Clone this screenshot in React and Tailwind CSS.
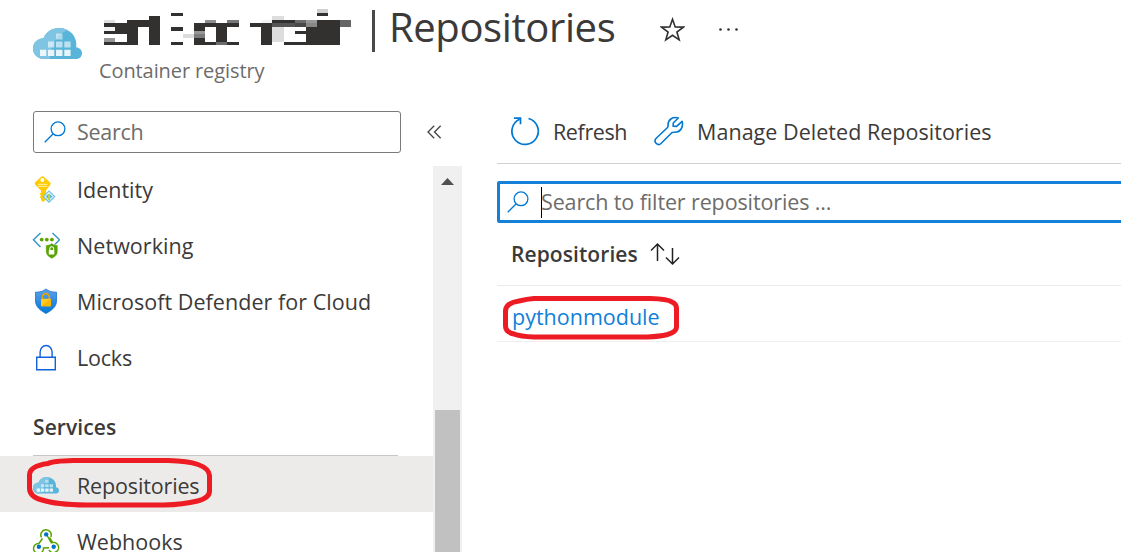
import React from "react";

// Redacted registry name: [x, y, width, height, colour] blocks on a fine grid.
const MOSAIC = [
  [252, 60, 33, 9, "#e0e0e0"], [252, 69, 69, 12, "#323130"], [252, 81, 33, 12, "#f3f3f3"],
  [285, 81, 36, 12, "#323130"], [252, 93, 69, 9, "#323130"], [252, 114, 33, 12, "#979797"],
  [252, 126, 102, 9, "#323130"], [321, 60, 33, 75, "#323130"], [354, 60, 33, 21, "#323130"],
  [387, 48, 33, 87, "#323130"], [453, 39, 36, 9, "#323130"], [453, 81, 36, 12, "#323130"],
  [453, 126, 36, 9, "#323130"], [489, 102, 33, 12, "#dcdcdc"], [522, 69, 33, 24, "#323130"],
  [522, 93, 33, 9, "#979797"], [522, 102, 33, 12, "#7c7c7c"], [522, 114, 33, 21, "#323130"],
  [555, 60, 33, 9, "#8f8f8f"], [555, 69, 33, 12, "#323130"], [555, 126, 33, 9, "#323130"],
  [588, 69, 33, 57, "#323130"], [588, 126, 33, 9, "#6b6b6b"], [621, 60, 36, 9, "#777777"],
  [621, 69, 36, 12, "#323130"], [621, 126, 36, 9, "#323130"], [690, 69, 33, 12, "#323130"],
  [723, 60, 33, 9, "#f3f3f3"], [723, 69, 33, 66, "#323130"], [756, 48, 36, 12, "#dddddd"],
  [756, 60, 69, 9, "#323130"], [756, 69, 69, 12, "#555555"], [756, 81, 36, 45, "#dddddd"],
  [792, 126, 66, 9, "#323130"], [825, 60, 33, 9, "#6b6b6b"], [825, 69, 33, 12, "#484848"],
  [825, 93, 33, 9, "#323130"], [858, 60, 33, 9, "#979797"], [858, 69, 33, 12, "#888888"],
  [858, 81, 33, 54, "#323130"], [891, 27, 33, 12, "#d0d0d0"], [891, 39, 33, 9, "#323130"],
  [891, 60, 69, 75, "#323130"], [960, 60, 33, 21, "#666666"],
];

function RedactedName() {
  return (
    <svg className="block h-[46px] w-[248px]" viewBox="252 0 744 138" shapeRendering="crispEdges">
      {MOSAIC.map(([x, y, w, h, c], i) => (
        <rect key={i} x={x} y={y} width={w} height={h} fill={c} />
      ))}
    </svg>
  );
}

function RegistryIcon({ className }) {
  return (
    <svg className={className} viewBox="0 0 49 32">
      <path d="M11 31C5 31 0 26.500 0 20.500 0 15 4.500 10.500 10.500 10.300 13 4 19 0 26 0c9.500 0 17 7 17.300 15.500v4c3.200 0 5.700 2.500 5.700 5.700 0 3.300-2.500 5.800-6 5.800z" fill="#59b4d9" />
      <path d="M11 31C5 31 0 26.500 0 20.500 0 15 4.500 10.500 10.500 10.300 13 4 19 0 26 0c3 0 6 .8 8.500 2.200C24 6 19 14 16.500 31z" fill="#7fc5e3" />
      <g fill="#fff">
        <path opacity=".5" d="M23 5.500h6.500v6H23z" />
        <path opacity=".6" d="M15 13.500h6.300v6H15zM23 13.500h6.500v6H23zM31.300 13.500h6.300v6h-6.300z" />
        <path opacity=".85" d="M7 21.800h6.300V28H7zM15 21.800h6.300V28H15zM23 21.800h6.500V28H23zM31.300 21.800h6.300V28h-6.300z" />
      </g>
    </svg>
  );
}

function SearchIcon() {
  return (
    <svg className="block h-[22px] w-[22px] shrink-0" viewBox="0 0 22 22" fill="none" stroke="#0078d4" strokeWidth="1.300">
      <circle cx="14" cy="7.800" r="6.900" />
      <path d="M9.200 12.700.7 21.200" />
    </svg>
  );
}

function KeyIcon() {
  return (
    <svg className="block h-[28px] w-[28px]" viewBox="-1 0 28 28">
      <path d="M8.200.8Q9.500-.3 10.800.8l6.200 5.600q1.200 1.100.2 2.400l-4.200 5.700v9.300L10 26l-2-2v-1.500L6.700 21 8 19.500 6.700 18 8 16.500v-2L2.500 9Q1 7.500 2.500 6z" fill="#ffca00" />
      <circle cx="9.400" cy="4" r="2" fill="#fff" />
      <path d="M5 8.300h9.300M5 10.300h9.300" stroke="#fff4a8" strokeWidth="1" />
      <path d="m16 14.800 6 5.700-6 6-6-6z" fill="#59b4d9" stroke="#72c3e5" />
      <path d="m16 16.500-4.200 4 4.200 4 4.200-4zM16 16v8" fill="none" stroke="#d7f0fb" strokeWidth="1.200" />
      <path d="M16 18v6" stroke="#b8d432" strokeWidth="1.800" />
    </svg>
  );
}

function NetworkIcon() {
  return (
    <svg className="block h-[28px] w-[28px]" viewBox="-.5 0 28 28">
      <path d="M8 1 1 7.800 8 15M20 1l7 6.800L20 15" fill="none" stroke="#3999c6" strokeWidth="1.500" />
      <g fill="#5da500"><circle cx="9.200" cy="7.600" r="1.900" /><circle cx="14.300" cy="7.600" r="1.900" /><circle cx="19.400" cy="7.600" r="1.900" /></g>
      <path d="M13.300 13c2.800 0 4.500-.6 6-2 1.500 1.400 3.200 2 6 2v6.500c0 3.500-3 5.600-6 7.300-3-1.700-6-3.800-6-7.300z" fill="#57a300" stroke="#fff" strokeWidth=".5" />
      <path d="M16.300 18h5.500v4.500h-5.500z" fill="#fff" />
      <path d="M17.300 18.500v-1.800a1.900 1.900 0 0 1 3.800 0v1.800" fill="none" stroke="#fff" strokeWidth="1.100" />
    </svg>
  );
}

function DefenderIcon() {
  return (
    <svg className="block h-[28px] w-[28px]" viewBox="-.5 0 28 28">
      <defs>
        <linearGradient id="shield" x1="0" y1="0" x2="0" y2="1">
          <stop offset="0" stopColor="#5ea0ef" /><stop offset="1" stopColor="#0078d4" />
        </linearGradient>
      </defs>
      <path d="M3 4.200c5 0 7.500-1 10.500-3.200 3 2.200 5.500 3.200 10.500 3.200V13c0 6-5.500 9.800-10.500 12.500C8.500 22.800 3 19 3 13z" fill="url(#shield)" stroke="#1b72c5" strokeWidth=".8" />
      <path d="M10 11V9a3.400 3.400 0 0 1 6.800 0v2.500" fill="none" stroke="#e9a300" strokeWidth="1.600" />
      <rect x="8.500" y="10.800" width="10" height="7.400" rx=".7" fill="#ffca20" />
      <path d="m8.500 18.200 10-7.400v7.400z" fill="#f8b800" />
    </svg>
  );
}

function LockIcon() {
  return (
    <svg className="block h-[28px] w-[28px]" viewBox="-.5 0 28 28" fill="none" stroke="#0f62dc" strokeWidth="1.400">
      <path d="M4.200 13.200h18.600v12.600H4.200z" />
      <path d="M7.600 13V8a6 6.500 0 0 1 12 0v5" />
    </svg>
  );
}

function WebhookIcon() {
  return (
    <svg className="block h-[28px] w-[28px]" viewBox="-.5 0 28 28" fill="none" stroke="#57a300" strokeWidth="1.500">
      <path d="M9 9.500A5.200 5.200 0 1 1 18.300 9M10 10.500l-3.600 5A5 5 0 1 0 11 20l5.500-.2M14 6.500l4.800 8.400A5.100 5.100 0 1 1 16.500 22M17 9.500l3 5" />
      <g fill="#0072c6" stroke="none"><circle cx="13.700" cy="6.400" r="2.200" /><circle cx="6.400" cy="18.700" r="2.200" /><circle cx="21.200" cy="18.700" r="2.200" /></g>
    </svg>
  );
}

function NavItem({ icon, label, spacing, active, lowered, children }) {
  return (
    <li className={`relative flex h-14 shrink-0 items-center pl-[32px] ${active ? "bg-[#edebe9]" : ""} ${lowered ? "pt-1" : ""}`}>
      <span className="flex w-[28px] shrink-0 justify-center">{icon}</span>
      <span className={`ml-[17px] whitespace-nowrap ${spacing}`}>{label}</span>
      {children}
    </li>
  );
}

export default function App() {
  return (
    <div className="flex h-[552px] w-[1121px] flex-col overflow-hidden bg-white font-['Open_Sans','Noto_Sans',sans-serif] text-[21.5px] leading-[30px] text-[#3b3a39]">
      <header className="flex h-[98px] shrink-0 items-start">
        <RegistryIcon className="mt-[28px] ml-[33px] h-[32px] w-[49px] shrink-0" />
        <div className="ml-[17px]">
          <div className="flex h-[56px] items-start">
            <span className="ml-[5px]"><RedactedName /></span>
            <h1 className="ml-[20px] flex h-[54px] items-center whitespace-nowrap text-[40px] tracking-[-0.4px]">
              <span className="mt-[8px] mr-[14px] h-[42px] w-[3px] bg-[#4a4948]" />
              Repositories
            </h1>
            <svg className="mt-[17px] ml-[45px] h-[25px] w-[25px]" viewBox="0 0 25 25" fill="none" stroke="#323130" strokeWidth="1.600">
              <path d="m12.500 2.300 2.700 7.600 8.200.2-6.500 4.900 2.300 7.900-6.700-4.600-6.700 4.600 2.300-7.900L1.600 10.100l8.200-.2z" />
            </svg>
            <svg className="mt-[27px] ml-[33px] h-[5px] w-[22px]" viewBox="0 0 22 5" fill="#323130">
              <circle cx="2.500" cy="2.500" r="1.300" /><circle cx="10.500" cy="2.500" r="1.300" /><circle cx="18.500" cy="2.500" r="1.300" />
            </svg>
          </div>
          <p className="w-max text-[20px] tracking-[-0.1px] text-[#6e6c6a]">Container registry</p>
        </div>
      </header>

      <div className="flex min-h-0 flex-1">
        <aside className="flex w-[462px] shrink-0 flex-col">
          <div className="mt-[13px] mb-[13px] flex h-[42px] shrink-0 items-center pl-[33px]">
            <div className="flex h-full w-[368px] items-center rounded-[3px] border border-[#7c7a78] pl-[10px] text-[#6e6c6a]">
              <SearchIcon />
              <span className="ml-[11px] tracking-[-0.3px]">Search</span>
            </div>
            <svg className="ml-[26px] h-[14px] w-[15px]" viewBox="0 0 15 14" fill="none" stroke="#444" strokeWidth="1.300">
              <path d="M7.200.8 1 7l6.200 6.200M13.700.8 7.500 7l6.200 6.200" />
            </svg>
          </div>
          <div className="flex min-h-0 flex-1">
            <nav className="w-[433px] shrink-0">
              <ul className="-mt-1 flex flex-col">
                <NavItem icon={<KeyIcon />} label="Identity" spacing="tracking-[0px]" />
                <NavItem icon={<NetworkIcon />} label="Networking" spacing="tracking-[0.07px]" />
                <NavItem icon={<DefenderIcon />} label="Microsoft Defender for Cloud" spacing="tracking-[0.04px]" />
                <NavItem icon={<LockIcon />} label="Locks" spacing="tracking-[-0.2px]" />
              </ul>
              <h2 className="mt-[13px] mr-[35px] ml-[33px] h-[57px] border-b border-[#c8c6c4] pt-[13px] text-[21px] font-semibold tracking-[0.1px]">Services</h2>
              <ul className="flex flex-col">
                <NavItem icon={<RegistryIcon className="-mt-[2px] h-[17px] w-[26px]" />} label="Repositories" spacing="tracking-[-0.15px]" active lowered>
                  <svg className="absolute top-[1px] left-[26px] h-[52px] w-[188px]" viewBox="0 0 188 52" fill="none" stroke="#ed1c24" strokeWidth="5">
                    <path d="M22 6.500Q27 4 47 3.500h95Q162 4 172 7.500q11 4 11.500 11V34q0 7-12 10-14 3.500-34 4H60Q30 47.500 16 43 3.500 40 3.500 31V18Q3.500 9 22 6.500z" />
                  </svg>
                </NavItem>
                <NavItem icon={<WebhookIcon />} label="Webhooks" spacing="tracking-[0px]" lowered />
              </ul>
            </nav>
            <div className="flex w-[29px] flex-col items-center bg-[#f0f0f0] pt-[12px]">
              <svg className="h-[7px] w-[13px] shrink-0" viewBox="0 0 13 7"><path d="M6.500 0 13 7H0z" fill="#505050" /></svg>
              <div className="mt-[225px] w-[25px] flex-1 bg-[#c1c1c1]" />
            </div>
          </div>
        </aside>

        <main className="ml-[35px] flex min-w-0 flex-1 flex-col">
          <div className="flex h-[66px] shrink-0 items-center border-b border-[#d2d0ce] pt-[3px] pl-[13px]">
            <svg className="-mt-[2px] h-[30px] w-[30px] shrink-0" viewBox="0 0 30 30" fill="none" stroke="#0078d4" strokeWidth="1.700">
              <path d="M9.500 3.300A13.200 13.200 0 1 0 18.500 2.500M4 2.200h6.500v6" />
            </svg>
            <span className="ml-[13px] tracking-[-0.4px]">Refresh</span>
            <svg className="-mt-[2px] ml-[27px] h-[30px] w-[30px] shrink-0" viewBox="0 0 30 30" fill="none" stroke="#0078d4" strokeWidth="1.600" strokeLinejoin="round">
              <path d="m24.300 2-5 5-.2 3.300 3.500.1 5.500-5c1.500 5-1.300 11-7.500 10.800-1.500 0-2-.2-2.800.5L7 27.500c-3 3-8-1.500-5-5l11.500-11c.7-.8.5-1.300.5-2.500C14 3.500 19 .2 24.300 2z" />
            </svg>
            <span className="ml-[13px] whitespace-nowrap tracking-[0.03px]">Manage Deleted Repositories</span>
          </div>
          <div className="mt-[17px] flex h-[42px] shrink-0 items-center rounded-l-[3px] border-y-3 border-l-3 border-[#1580d8] pl-[7px] text-[#6e6c6a]">
            <SearchIcon />
            <span className="ml-[12px] h-[31px] w-px bg-black" />
            <span className="-ml-px whitespace-nowrap tracking-[-0.12px]">Search to filter repositories ...</span>
          </div>
          <div className="flex h-[63px] shrink-0 items-center border-b border-[#edebe9] pl-[14px]">
            <span className="text-[21px] font-semibold tracking-[0.08px]">Repositories</span>
            <svg className="ml-[12px] h-[24px] w-[30px]" viewBox="0 0 30 24" fill="none" stroke="#222" strokeWidth="1.500">
              <path d="M7.500 19V2M1 8.500 7.500 2 14 8.500M22.500 6v16M16 15.500l6.500 6.500 6.500-6.500" />
            </svg>
          </div>
          <div className="relative flex h-14 shrink-0 items-center border-b border-[#f0efed] pt-[6px] pl-[15px]">
            <a className="tracking-[0px] text-[#1180d8]">pythonmodule</a>
            <svg className="absolute top-[9px] left-[5px] h-[46px] w-[180px]" viewBox="0 0 180 46" fill="none" stroke="#ed1c24" strokeWidth="5">
              <path d="M17 6Q25 4 32 3.500h116Q166 4 170 7q4.500 2 4.500 6v19q0 5-9 7.500-8 2-20 2.500H32Q18 41.500 12 39q-8.500-2-8.500-8V16q0-8 13.500-10z" />
            </svg>
          </div>
        </main>
      </div>
    </div>
  );
}
